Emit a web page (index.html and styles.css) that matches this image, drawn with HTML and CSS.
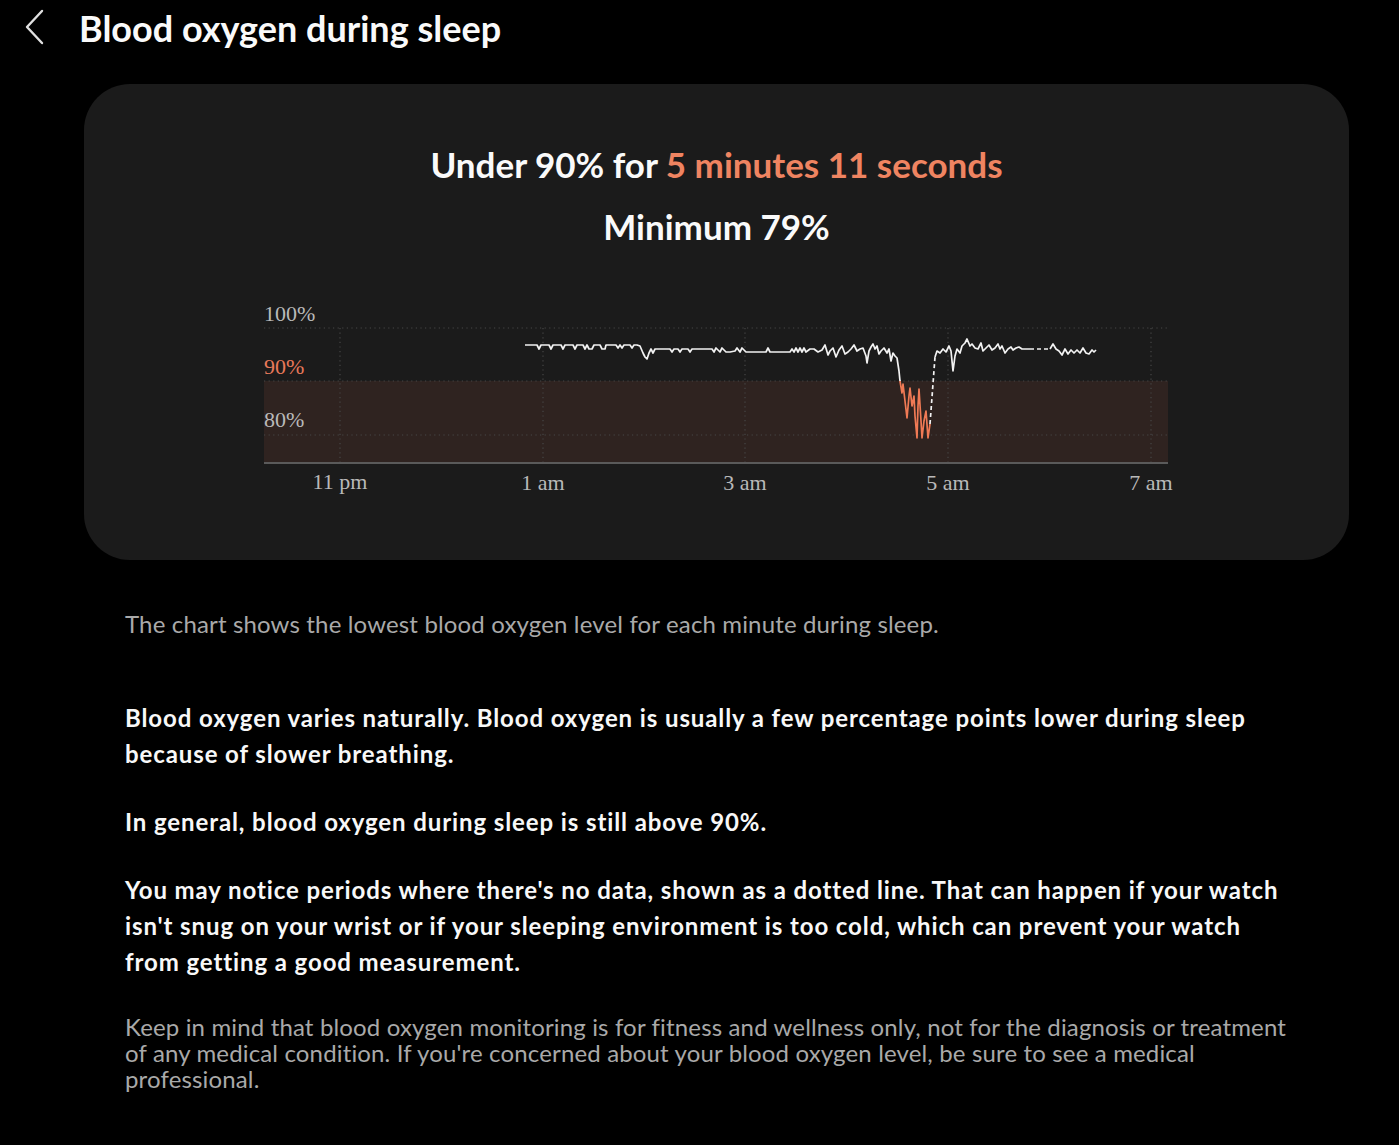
FILE: index.html
```
<!DOCTYPE html>
<html lang="en">
<head>
<meta charset="UTF-8">
<meta name="viewport" content="width=device-width, initial-scale=1.0">
<title>Blood oxygen during sleep</title>
<link rel="stylesheet" href="styles.css">
</head>
<body>
<header class="topbar">
  <svg class="back" width="24" height="38" viewBox="0 0 24 38"><polyline points="20,2 5,18 20,34"/></svg>
  <h1>Blood oxygen during sleep</h1>
</header>

<section class="card">
  <h2>Under 90% for <span class="hl">5 minutes 11 seconds</span></h2>
  <h2>Minimum 79%</h2>

  <svg class="chart" width="920" height="205" viewBox="0 0 920 205">
    <defs>
      <!-- clip rects are in page coords, same as the data group -->
      <clipPath id="above" clipPathUnits="userSpaceOnUse"><rect x="0" y="0" width="1400" height="380"/></clipPath>
      <clipPath id="below" clipPathUnits="userSpaceOnUse"><rect x="0" y="380" width="1400" height="200"/></clipPath>
      <polyline id="seg-a" points="525,344 537,344 539,348 541,344 549,344 551,348 553,344 561,344 563,348 565,344 573,344 575,348 577,344 583,344 585,348 587,344 589,348 592,348 594,344 600,344 602,348 605,348 606,344 616,344 618,347 620,344 622,347 624,344 630,344 632,347 634,344 637,344 640,345 643,352 645,356 647,358 649,352 651,348 653,352 655,348 660,348 670,348 672,351 674,348 678,348 680,351 682,348 688,348 690,351 692,348 700,348 712,348 714,351 716,347 720,351 722,347 726,351 730,351 735,350 737,347 740,351 742,347 746,351 752,351 760,351 766,351 768,347 770,351 780,351 790,351 792,348 794,351 796,347 798,351 800,347 802,351 804,347 806,351 810,348 814,348 818,351 822,349 825,344 828,354 830,350 833,347 836,356 839,349 842,345 845,353 848,351 851,348 854,344 857,350 860,348 863,347 866,355 867,362 869,350 871,346 873,343 875,348 877,345 879,353 881,350 884,347 887,352 889,348 891,360 893,352 895,355 897,357 899,370 900,380 902,392 903,383 905,400 907,417 909,395 910,387 912,405 914,395 915,415 917,437 918,405 919,388 921,420 922,437 924,420 926,410 928,437 930,423"/>
    </defs>
    <rect class="band" x="4" y="85" width="904" height="82"/>
    <line class="grid" x1="4" y1="32" x2="908" y2="32"/>
    <line class="grid" x1="4" y1="85" x2="908" y2="85"/>
    <line class="grid" x1="4" y1="139" x2="908" y2="139"/>
    <line class="grid" x1="80" y1="32" x2="80" y2="167"/>
    <line class="grid" x1="283" y1="32" x2="283" y2="167"/>
    <line class="grid" x1="485" y1="32" x2="485" y2="167"/>
    <line class="grid" x1="688" y1="32" x2="688" y2="167"/>
    <line class="grid" x1="891" y1="32" x2="891" y2="167"/>
    <line class="axis" x1="4" y1="167" x2="908" y2="167"/>

    <text class="ylab" x="4" y="25">100%</text>
    <text class="ylab warn" x="4" y="78">90%</text>
    <text class="ylab" x="4" y="131">80%</text>

    <text class="xlab" x="80" y="193">11 pm</text>
    <text class="xlab" x="283" y="194">1 am</text>
    <text class="xlab" x="485" y="194">3 am</text>
    <text class="xlab" x="688" y="194">5 am</text>
    <text class="xlab" x="891" y="194">7 am</text>

    <g transform="translate(-260,-295)">
      <use href="#seg-a" class="line" clip-path="url(#above)"/>
      <use href="#seg-a" class="line low" clip-path="url(#below)"/>
      <line class="line dash" x1="930" y1="423" x2="935" y2="356"/>
      <polyline class="line" points="935,356 937,350 940,352 943,348 946,351 949,345 951,350 953,370 955,355 957,348 960,352 962,345 965,342 967,338 970,345 972,343 975,347 978,348 981,342 983,350 986,347 989,344 992,349 995,347 998,343 1000,348 1002,345 1005,352 1008,348 1011,346 1013,349 1016,347 1019,346 1022,348 1026,348 1030,348"/>
      <line class="line dash" x1="1030" y1="348" x2="1050" y2="348"/>
      <polyline class="line" points="1050,348 1053,343 1056,348 1059,350 1062,354 1065,348 1068,353 1071,349 1074,352 1077,349 1080,352 1083,347 1086,352 1089,353 1092,349 1094,351 1096,349"/>
    </g>
  </svg>
</section>

<section class="notes">
  <p class="muted">The chart shows the lowest blood oxygen level for each minute during sleep.</p>
  <p class="lead">Blood oxygen varies naturally. Blood oxygen is usually a few percentage points lower during sleep because of slower breathing.</p>
  <p>In general, blood oxygen during sleep is still above 90%.</p>
  <p>You may notice periods where there's no data, shown as a dotted line. That can happen if your watch isn't snug on your wrist or if your sleeping environment is too cold, which can prevent your watch from getting a good measurement.</p>
  <p class="muted small">Keep in mind that blood oxygen monitoring is for fitness and wellness only, not for the diagnosis or treatment of any medical condition. If you're concerned about your blood oxygen level, be sure to see a medical professional.</p>
</section>
</body>
</html>
```

FILE: styles.css
```
body{margin:0;background:#000;color:#f4f4f4;font-family:Lato,"Noto Sans",sans-serif;}

.topbar{display:flex;align-items:center;height:56px;padding-left:22px;gap:33px;}
.back polyline{fill:none;stroke:#e0e0e0;stroke-width:2.4;stroke-linecap:round;stroke-linejoin:round;}
.topbar h1{margin:0;font-size:36px;font-weight:700;line-height:56px;color:#fafafa;}

.card{margin:28px 50px 0 84px;background:#1b1b1b;border-radius:46px;padding:49px 0 59px;display:flex;flex-direction:column;align-items:center;}
.card h2{margin:0;font-size:35px;font-weight:700;line-height:62px;color:#fafafa;}
.card .hl{color:#ef8461;}

.chart{display:block;align-self:flex-start;margin:39px 0 0 176px;overflow:visible;}
.chart .band{fill:#2f2320;}
.chart .grid{stroke:#474747;stroke-width:1.2;stroke-dasharray:1.2 3.4;}
.chart .axis{stroke:#5a5a5a;stroke-width:2;}
.chart .ylab{font-family:"Liberation Serif",serif;font-size:22px;fill:#b9b9b9;}
.chart .ylab.warn{fill:#e8795a;}
.chart .xlab{font-family:"Liberation Serif",serif;font-size:22px;fill:#b9b9b9;text-anchor:middle;}
.chart .line{fill:none;stroke:#f2f2f2;stroke-width:1.7;stroke-linejoin:round;}
.chart .dash{stroke-dasharray:4 3;}
.chart .low{stroke:#f07a55;}

.notes{padding:0 104px 40px 125px;}
.notes p{margin:0 0 32px;font-size:24px;line-height:36px;font-weight:700;letter-spacing:0.9px;color:#f8f8f8;}
.notes .muted{font-weight:400;color:#a9a9a9;letter-spacing:0.15px;}
.notes .muted:first-child{margin:46px 0 58px;}
.notes .small{line-height:26px;margin-top:34px;}
```
